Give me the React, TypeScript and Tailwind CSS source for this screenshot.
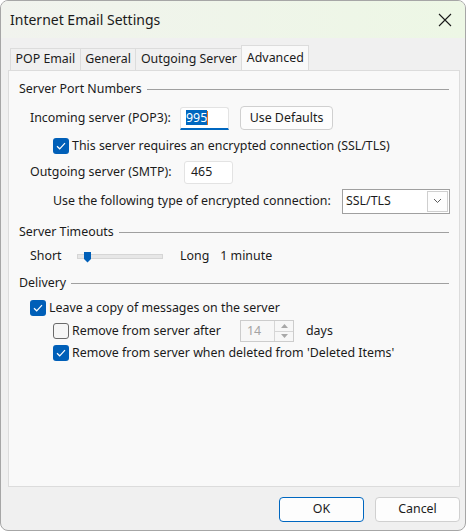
import React from 'react';

function Check({ checked }: { checked: boolean }) {
  if (!checked) {
    return (
      <div className="w-[16px] h-[16px] rounded-[3px] border border-[#6a6a6a] bg-[#f6f6f6] shrink-0" />
    );
  }
  return (
    <div className="w-[16px] h-[16px] rounded-[3px] bg-[#005fb8] flex items-center justify-center shrink-0">
      <svg width="10" height="8" viewBox="0 0 10 8" fill="none">
        <path d="M1 4.2 L3.7 6.8 L9 1.2" stroke="white" strokeWidth="1.2" />
      </svg>
    </div>
  );
}

function GroupHeader({ title }: { title: string }) {
  return (
    <div className="flex items-center h-[20px] pr-[10px]">
      <span>{title}</span>
      <div className="flex-1 h-px bg-[#a0a0a0] ml-[5px]" />
    </div>
  );
}

function Tab({ label, active }: { label: string; active?: boolean }) {
  if (active) {
    return (
      <div className="h-[25px] -mb-px px-[4.5px] flex items-center border border-b-0 border-[#dcdcdc] bg-[#f9f9f9] z-10 relative">
        {label}
      </div>
    );
  }
  return (
    <div className="h-[22px] mt-[3px] px-[4.5px] flex items-center border border-r-0 border-b-0 border-[#dcdcdc] bg-[#f0f0f0]">
      {label}
    </div>
  );
}

export default function App() {
  return (
    <div className="w-[468px] h-[532px] bg-white font-['Noto_Sans',sans-serif] text-[12.4px] text-[#1b1b1b]">
      <div className="w-[466px] h-[531px] border border-[#a6a6a6] rounded-[8px] bg-[#f0f0f0] overflow-hidden flex flex-col">
        {/* title bar */}
        <div className="h-[37px] flex items-center justify-between pl-[9px] pr-[13px] bg-gradient-to-r from-[#f1f3ee] to-[#edf7e5]">
          <span className="text-[14px] text-[#1a1a1a]">Internet Email Settings</span>
          <svg width="14" height="14" viewBox="0 0 14 14">
            <path d="M1 1 L13 13 M13 1 L1 13" stroke="#1a1a1a" strokeWidth="1.1" />
          </svg>
        </div>

        {/* tabs */}
        <div className="pl-[9px] pt-[7px] flex">
          <Tab label="POP Email" />
          <Tab label="General" />
          <Tab label="Outgoing Server" />
          <Tab label="Advanced" active />
        </div>

        {/* tab panel */}
        <div className="ml-[7px] w-[452px] h-[417px] border border-[#dcdcdc] bg-[#f9f9f9] pl-[10px] pt-[8px]">
          <GroupHeader title="Server Port Numbers" />

          <div className="flex items-center h-[26px] mt-[6px] pl-[11px]">
            <span className="w-[150px]">Incoming server (POP3):</span>
            <div className="w-[49px] h-[23px] bg-white border border-[#e3e3e3] border-b-2 border-b-[#0067c0] flex items-center pl-[5px] rounded-t-[3px]">
              <span className="bg-[#0067c0] text-white leading-[15px]">995</span>
              <span className="w-px h-[14px] bg-[#e07020]" />
            </div>
            <button className="ml-[11px] w-[93px] h-[24px] rounded-[4px] border border-[#d0d0d0] bg-[#fdfdfd] flex items-center justify-center">
              Use Defaults
            </button>
          </div>

          <div className="flex items-center h-[18px] mt-[6px] pl-[34px] gap-[3px]">
            <Check checked />
            <span>This server requires an encrypted connection (SSL/TLS)</span>
          </div>

          <div className="flex items-center h-[24px] mt-[5px] pl-[11px]">
            <span className="w-[154px]">Outgoing server (SMTP):</span>
            <div className="w-[49px] h-[23px] bg-white border border-[#e3e3e3] flex items-center pl-[6px] rounded-[3px]">
              465
            </div>
          </div>

          <div className="flex items-center h-[26px] mt-[4px] pl-[34px]">
            <span className="w-[289px]">Use the following type of encrypted connection:</span>
            <div className="w-[108px] h-[25px] border border-[#a0a0a0] bg-white flex items-center justify-between pl-[3px] pr-[1px]">
              <span>SSL/TLS</span>
              <div className="w-[21px] h-[21px] border border-[#cfcfcf] bg-[#fdfdfd] flex items-center justify-center">
                <svg width="9" height="6" viewBox="0 0 9 6">
                  <path d="M1 1 L4.5 4.5 L8 1" stroke="#5a5a5a" strokeWidth="1" fill="none" />
                </svg>
              </div>
            </div>
          </div>

          <div className="mt-[8px]">
            <GroupHeader title="Server Timeouts" />
          </div>

          <div className="flex items-center h-[20px] mt-[4px] pl-[11px]">
            <span className="w-[47px]">Short</span>
            <div className="relative w-[86px] h-[5px] bg-[#e7e7e7] border border-[#d6d6d6]">
              <svg className="absolute left-[6px] -top-[3px]" width="7" height="11" viewBox="0 0 7 11">
                <path d="M0 0 H7 V7 L3.5 10.5 L0 7 Z" fill="#005fb8" />
              </svg>
            </div>
            <span className="ml-[17px]">Long</span>
            <span className="ml-[11px]">1 minute</span>
          </div>

          <div className="mt-[7px]">
            <GroupHeader title="Delivery" />
          </div>

          <div className="flex items-center h-[20px] mt-[5px] pl-[11px] gap-[3px]">
            <Check checked />
            <span>Leave a copy of messages on the server</span>
          </div>

          <div className="flex items-center h-[22px] mt-[2px] pl-[34px]">
            <Check checked={false} />
            <span className="ml-[3px] w-[168px]">Remove from server after</span>
            <div className="w-[54px] h-[22px] border border-[#cccccc] bg-[#f7f7f7] flex">
              <span className="flex-1 pl-[6px] flex items-center text-[#a3a3a3]">14</span>
              <div className="w-[19px] border-l border-[#d6d6d6] flex flex-col">
                <div className="flex-1 flex items-center justify-center border-b border-[#d6d6d6]">
                  <svg width="7" height="4" viewBox="0 0 7 4">
                    <path d="M0 4 L3.5 0 L7 4 Z" fill="#a8a8a8" />
                  </svg>
                </div>
                <div className="flex-1 flex items-center justify-center">
                  <svg width="7" height="4" viewBox="0 0 7 4">
                    <path d="M0 0 L3.5 4 L7 0 Z" fill="#a8a8a8" />
                  </svg>
                </div>
              </div>
            </div>
            <span className="ml-[12px]">days</span>
          </div>

          <div className="flex items-center h-[20px] mt-[1px] pl-[34px] gap-[3px]">
            <Check checked />
            <span>Remove from server when deleted from 'Deleted Items'</span>
          </div>
        </div>

        {/* footer buttons */}
        <div className="flex justify-end gap-[11px] pr-[5px] pt-[10px]">
          <button className="w-[85px] h-[25px] rounded-[4px] border border-[#0067c0] bg-[#fdfdfd] flex items-center justify-center">
            OK
          </button>
          <button className="w-[85px] h-[25px] rounded-[4px] border border-[#d0d0d0] bg-[#fdfdfd] flex items-center justify-center">
            Cancel
          </button>
        </div>
      </div>
    </div>
  );
}
